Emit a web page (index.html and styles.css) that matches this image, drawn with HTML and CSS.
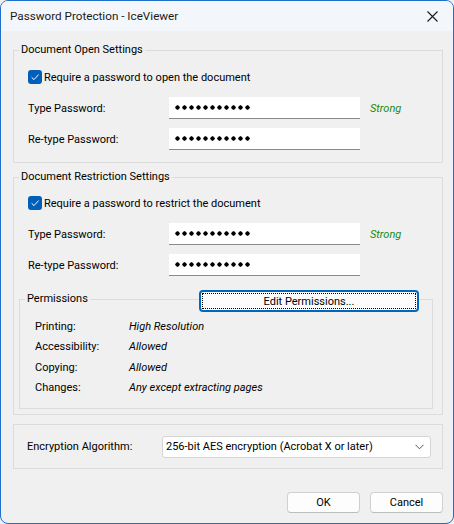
FILE: index.html
```html
<!DOCTYPE html>
<html lang="en">

<head>
    <meta charset="UTF-8" />
    <title>Password Protection - IceViewer</title>
    <link rel="stylesheet" href="styles.css">
</head>

<body>

    <div class="window">
        <!-- Barre de titre -->
        <div class="titlebar">
            <span class="title">Password Protection - IceViewer</span>
            <button class="close" aria-label="Close">
                <svg width="11" height="11" viewBox="0 0 11 11">
                    <path d="M0.5 0.5 L10.5 10.5 M10.5 0.5 L0.5 10.5" stroke="#1a1a1a" stroke-width="1.1" fill="none" />
                </svg>
            </button>
        </div>

        <div class="content">
            <!-- Ouverture du document -->
            <fieldset class="group group-open">
                <legend>Document Open Settings</legend>
                <label class="check">
                    <span class="box">
                        <svg width="14" height="14" viewBox="0 0 14 14">
                            <rect x="0" y="0" width="14" height="14" rx="3" fill="#005fb8" />
                            <path d="M3.6 7.3 L6 9.6 L10.6 4.6" stroke="#fff" stroke-width="1" fill="none" />
                        </svg>
                    </span>
                    Require a password to open the document
                </label>
                <div class="pw-row">
                    <span class="pw-label">Type Password:</span>
                    <span class="pw-field"><span class="dots"></span></span>
                    <span class="strength">Strong</span>
                </div>
                <div class="pw-row">
                    <span class="pw-label">Re-type Password:</span>
                    <span class="pw-field"><span class="dots"></span></span>
                </div>
            </fieldset>

            <!-- Restrictions -->
            <fieldset class="group group-restrict">
                <legend>Document Restriction Settings</legend>
                <label class="check">
                    <span class="box">
                        <svg width="14" height="14" viewBox="0 0 14 14">
                            <rect x="0" y="0" width="14" height="14" rx="3" fill="#005fb8" />
                            <path d="M3.6 7.3 L6 9.6 L10.6 4.6" stroke="#fff" stroke-width="1" fill="none" />
                        </svg>
                    </span>
                    Require a password to restrict the document
                </label>
                <div class="pw-row">
                    <span class="pw-label">Type Password:</span>
                    <span class="pw-field"><span class="dots"></span></span>
                    <span class="strength">Strong</span>
                </div>
                <div class="pw-row">
                    <span class="pw-label">Re-type Password:</span>
                    <span class="pw-field"><span class="dots"></span></span>
                </div>

                <fieldset class="perms">
                    <legend>Permissions</legend>
                    <button class="edit-btn">Edit Permissions...</button>
                    <div class="perm-row"><span class="perm-name">Printing:</span><span class="perm-value">High Resolution</span></div>
                    <div class="perm-row"><span class="perm-name">Accessibility:</span><span class="perm-value">Allowed</span></div>
                    <div class="perm-row"><span class="perm-name">Copying:</span><span class="perm-value">Allowed</span></div>
                    <div class="perm-row"><span class="perm-name">Changes:</span><span class="perm-value">Any except extracting pages</span></div>
                </fieldset>
            </fieldset>

            <!-- Algorithme -->
            <div class="encrypt">
                <span class="enc-label">Encryption Algorithm:</span>
                <div class="select">
                    <span>256-bit AES encryption (Acrobat X or later)</span>
                    <svg width="9" height="6" viewBox="0 0 9 6">
                        <path d="M0.5 0.8 L4.5 4.8 L8.5 0.8" stroke="#555" stroke-width="1" fill="none" />
                    </svg>
                </div>
            </div>

            <div class="footer">
                <button class="btn">OK</button>
                <button class="btn">Cancel</button>
            </div>
        </div>
    </div>

</body>

</html>
```

FILE: styles.css
```css
html,
body {
    margin: 0;
    background: #f0f0f0;
}

body {
    font-family: "Segoe UI", Roboto, "Noto Sans", sans-serif;
    font-size: 11px;
    color: #000;
}

.window {
    box-sizing: border-box;
    width: 454px;
    height: 524px;
    border: 1px solid #1f6fcc;
    border-radius: 8px;
    background: #f0f0f0;
    overflow: hidden;
    display: flex;
    flex-direction: column;
}

.titlebar {
    height: 30px;
    background: #f3f7fc;
    display: flex;
    align-items: center;
    justify-content: space-between;
    padding-left: 9px;
    flex-shrink: 0;
}

.title {
    font-size: 11.7px;
    color: #1a1a1a;
}

.close {
    border: none;
    background: transparent;
    width: 30px;
    height: 30px;
    margin-right: 6px;
    padding: 0;
    display: flex;
    align-items: center;
    justify-content: center;
}

.content {
    padding: 11px 10px 0 12px;
    display: flex;
    flex-direction: column;
    flex: 1;
}

/* Cadres de groupe */
.group {
    margin: 0;
    padding: 0 0 12px 0;
    border: 1px solid #dcdcdc;
    min-width: 0;
}

.group legend,
.perms legend {
    margin-left: 5px;
    padding: 0 2px;
    line-height: 16px;
}

.group-restrict {
    margin-top: 6px;
    padding-bottom: 5px;
}

.check {
    display: flex;
    align-items: center;
    height: 16px;
    margin: 11px 0 0 14px;
    gap: 2px;
}

.group-restrict .check {
    margin-top: 10px;
}

.box {
    display: flex;
    width: 14px;
    height: 14px;
}

.pw-row {
    display: flex;
    align-items: center;
    height: 22px;
    margin-top: 9px;
    padding-left: 14px;
}

.check + .pw-row {
    margin-top: 12px;
}

.pw-label {
    width: 141px;
}

.pw-field {
    box-sizing: border-box;
    width: 191px;
    height: 22px;
    background: #fff;
    border-bottom: 1px solid #8a8a8a;
    display: flex;
    align-items: center;
    padding-left: 6px;
}

.dots {
    width: 77px;
    height: 5px;
    background: radial-gradient(circle at 2.5px 2.5px, #000 1.9px, transparent 2.4px) repeat-x;
    background-size: 7px 5px;
}

.strength {
    margin-left: 10px;
    color: #168a16;
    font-style: italic;
}

/* Permissions */
.perms {
    position: relative;
    margin: 15px 9px 0 5px;
    padding: 10px 0 9px 0;
    border: 1px solid #dcdcdc;
    min-width: 0;
}

.edit-btn {
    position: absolute;
    top: -17px;
    right: 13px;
    box-sizing: border-box;
    width: 220px;
    height: 22px;
    font: inherit;
    background: #fdfdfd;
    border: 2px solid #0067c0;
    border-radius: 4px;
    padding: 0;
}

.edit-btn::after {
    content: "";
    position: absolute;
    inset: 1px;
    border: 1px dotted #000;
}

.perm-row {
    display: flex;
    height: 20.4px;
    line-height: 20px;
    padding-left: 15px;
}

.perm-name {
    width: 94px;
}

.perm-value {
    font-style: italic;
}

/* Algorithme de chiffrement */
.encrypt {
    margin-top: 9px;
    border: 1px solid #dcdcdc;
    display: flex;
    align-items: center;
    padding: 11px 11px 10px 13px;
}

.enc-label {
    width: 135px;
}

.select {
    box-sizing: border-box;
    flex: 1;
    height: 22px;
    background: #fff;
    border: 1px solid #d4d4d4;
    border-radius: 3px;
    display: flex;
    align-items: center;
    justify-content: space-between;
    padding: 0 6px 0 3px;
}

.footer {
    display: flex;
    justify-content: flex-end;
    gap: 10px;
    margin-top: 23px;
}

.btn {
    box-sizing: border-box;
    width: 73px;
    height: 21px;
    font: inherit;
    background: #fdfdfd;
    border: 1px solid #d0d0d0;
    border-bottom-color: #bdbdbd;
    border-radius: 4px;
    padding: 0;
}
```
